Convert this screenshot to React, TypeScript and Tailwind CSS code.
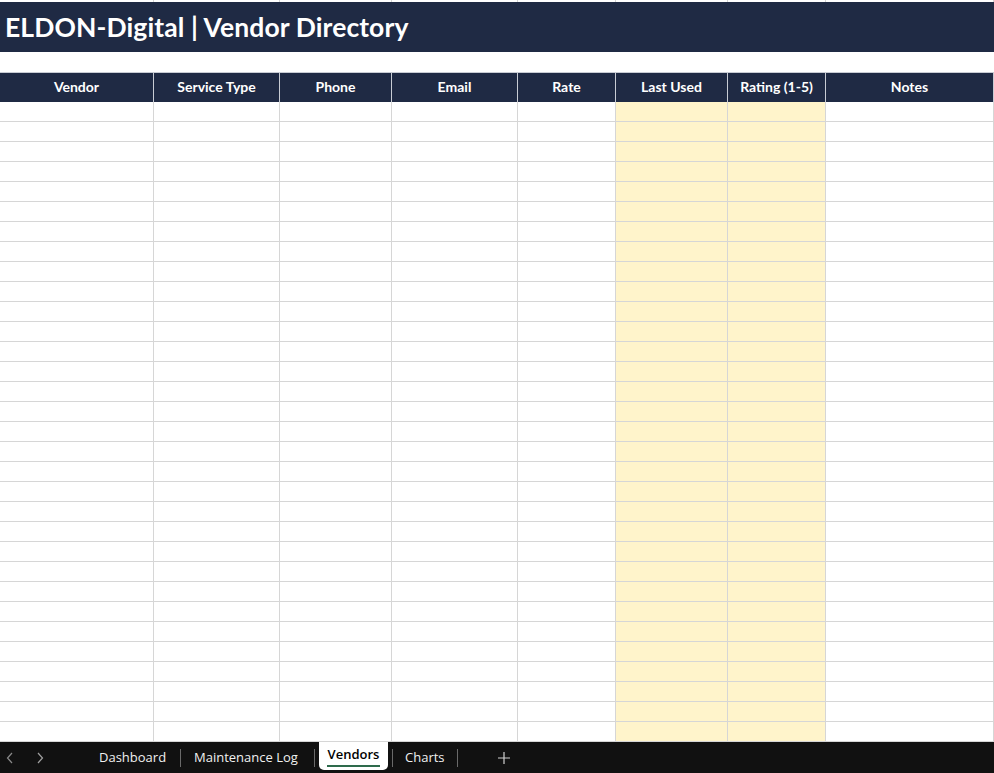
import React from "react";

const cols = ["Vendor", "Service Type", "Phone", "Email", "Rate", "Last Used", "Rating (1-5)", "Notes"];
const grid = "grid grid-cols-[154px_126px_112px_126px_98px_112px_98px_168px]";

export default function App() {
  const rows = Array.from({ length: 32 });
  return (
    <div className="w-[994px] h-[773px] overflow-hidden bg-white flex flex-col" style={{ fontFamily: "Lato, 'Open Sans', sans-serif" }}>
      {/* top sliver */}
      <div className={`${grid} h-[2px] shrink-0`}>
        {cols.map((c) => (
          <div key={c} className="border-r border-[#d4d4d4] bg-white" />
        ))}
      </div>
      {/* title */}
      <div className="h-[50px] shrink-0 bg-[#1f2a44] flex items-center pl-[5px]">
        <span className="text-white font-bold text-[26.5px] tracking-[0.1px] leading-none">ELDON-Digital | Vendor Directory</span>
      </div>
      <div className="h-[20px] shrink-0 bg-white" />
      {/* header */}
      <div className={`${grid} h-[30px] shrink-0 bg-[#1f2a44] border-t border-[#c8ccd4]`}>
        {cols.map((c) => (
          <div key={c} className="border-r border-[#c8ccd4] flex items-center justify-center text-white font-bold text-[14px] pb-[3px]">
            {c}
          </div>
        ))}
      </div>
      {/* data rows */}
      <div className="flex-1 overflow-hidden">
        {rows.map((_, i) => (
          <div key={i} className={`${grid} h-[20px]`}>
            {cols.map((c, j) => (
              <div
                key={c}
                className={`border-r border-b border-[#d6d6d6] ${j === 5 || j === 6 ? "bg-[#fff4cb]" : "bg-white"}`}
              />
            ))}
          </div>
        ))}
      </div>
      {/* tab bar */}
      <div className="h-[31px] shrink-0 bg-[#111111] flex items-stretch text-[13px] text-white" style={{ fontFamily: "'Open Sans', 'Noto Sans', sans-serif" }}>
        <div className="w-[20px] flex items-center justify-center text-[#8a8a8a]">
          <svg width="8" height="12" viewBox="0 0 8 12"><path d="M6 1 L1.5 6 L6 11" stroke="currentColor" strokeWidth="1.2" fill="none" /></svg>
        </div>
        <div className="w-[16px]" />
        <div className="w-[8px] flex items-center justify-center text-[#a0a0a0]">
          <svg width="8" height="12" viewBox="0 0 8 12"><path d="M2 1 L6.5 6 L2 11" stroke="currentColor" strokeWidth="1.2" fill="none" /></svg>
        </div>
        <div className="w-[55px]" />
        <div className="flex items-center w-[67px] whitespace-nowrap">
          <span className="text-[#f0f0f0]">Dashboard</span>
        </div>
        <div className="flex items-center pl-[14px] pr-[13px]"><div className="w-px h-[18px] bg-[#6a6a6a]" /></div>
        <div className="flex items-center w-[106px] whitespace-nowrap">
          <span className="text-[#f0f0f0]">Maintenance Log</span>
        </div>
        <div className="flex items-center pl-[14px] pr-[4px]"><div className="w-px h-[18px] bg-[#6a6a6a]" /></div>
        <div className="bg-white rounded-b-[5px] mb-[3px] flex flex-col items-center justify-center w-[69px]">
          <span className="text-black font-semibold text-[13px] leading-none mt-[3px]">Vendors</span>
          <div className="h-[2px] w-[53px] bg-[#2e6b4c] mt-[4px]" />
        </div>
        <div className="flex items-center pl-[4px] pr-[12px]"><div className="w-px h-[18px] bg-[#6a6a6a]" /></div>
        <div className="flex items-center w-[39px] whitespace-nowrap">
          <span className="text-[#f0f0f0]">Charts</span>
        </div>
        <div className="flex items-center pl-[13px] pr-[40px]"><div className="w-px h-[18px] bg-[#6a6a6a]" /></div>
        <div className="flex items-center">
          <svg width="12" height="12" viewBox="0 0 12 12"><path d="M6 0 V12 M0 6 H12" stroke="#d0d0d0" strokeWidth="1.2" /></svg>
        </div>
      </div>
    </div>
  );
}
